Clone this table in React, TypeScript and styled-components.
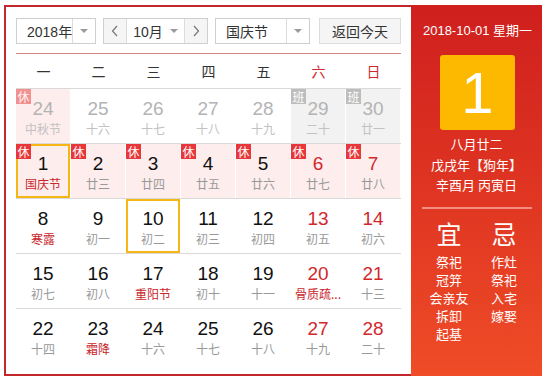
import React from "react";
import styled, { createGlobalStyle, css } from "styled-components";

const Global = createGlobalStyle`
  html, body { margin: 0; padding: 0; background: #fff; }
  body { font-family: "Liberation Sans", "Noto Sans CJK SC", sans-serif; }
  * { box-sizing: border-box; }
`;

const Page = styled.div`
  padding: 5px 0 0 4px;
`;

const Widget = styled.div`
  display: flex;
  width: 538px;
  height: 371px;
`;

const Main = styled.div`
  width: 407px;
  border: 2px solid #c3272b;
  border-right: none;
  padding: 11px 10px 0 10px;
  background: #fff;
`;

const Toolbar = styled.div`
  display: flex;
  align-items: stretch;
  gap: 7px;
  height: 26px;
  font-size: 14px;
  color: #333;
`;

const Select = styled.div<{ $w: number }>`
  width: ${(p) => p.$w}px;
  display: flex;
  border: 1px solid #cfcfcf;
  background: #fff;
`;

const SelectText = styled.div`
  flex: 1;
  display: flex;
  align-items: center;
  padding-left: 10px;
  white-space: nowrap;
  overflow: visible;
  font-family: "Liberation Sans", "Noto Sans CJK SC", sans-serif;
`;

const ArrowBox = styled.div`
  width: 23px;
  flex: none;
  border-left: 1px solid #dcdcdc;
  display: flex;
  align-items: center;
  justify-content: center;
`;

const Caret = styled.span`
  display: inline-block;
  width: 0;
  height: 0;
  border-left: 4px solid transparent;
  border-right: 4px solid transparent;
  border-top: 4px solid #9a9a9a;
`;

const MonthGroup = styled.div`
  width: 105px;
  display: flex;
  border: 1px solid #cfcfcf;
`;

const NavBtn = styled.div`
  width: 22px;
  background: #f5f5f5;
  display: flex;
  align-items: center;
  justify-content: center;
  color: #666;
  svg { display: block; }
`;

const MonthMid = styled.div`
  flex: 1;
  display: flex;
  align-items: center;
  justify-content: center;
  gap: 7px;
  border-left: 1px solid #dcdcdc;
  border-right: 1px solid #dcdcdc;
  background: #fff;
`;

const TodayBtn = styled.div`
  margin-left: auto;
  width: 82px;
  display: flex;
  align-items: center;
  justify-content: center;
  background: #f5f5f5;
  border: 1px solid #dcdcdc;
  color: #333;
`;

const RedLine = styled.div`
  margin-top: 9px;
  height: 1px;
  background: #d9837f;
`;

const WeekHead = styled.div`
  display: grid;
  grid-template-columns: repeat(7, 55px);
  height: 34px;
  align-items: center;
`;

const WeekDay = styled.div<{ $red?: boolean }>`
  text-align: center;
  font-size: 14px;
  color: ${(p) => (p.$red ? "#d2282d" : "#333")};
  font-family: "Noto Sans CJK SC", sans-serif;
`;

const Row = styled.div`
  display: grid;
  grid-template-columns: repeat(7, 55px);
  height: 55px;
  border-top: 1px solid #d9d9d9;
`;

type Tone = "none" | "rest" | "work";

const Cell = styled.div<{ $tone: Tone; $sel?: boolean }>`
  position: relative;
  height: 54px;
  margin-right: 1px;
  display: flex;
  flex-direction: column;
  align-items: center;
  background: ${(p) =>
    p.$tone === "rest" ? "#fdeded" : p.$tone === "work" ? "#f2f2f2" : "#fff"};
  ${(p) =>
    p.$sel &&
    css`
      &::after {
        content: "";
        position: absolute;
        inset: 0;
        border: 2px solid #f4b715;
        z-index: 1;
      }
    `}
`;

const Badge = styled.span<{ $work?: boolean; $faded?: boolean }>`
  position: absolute;
  top: 0;
  left: 0;
  z-index: 2;
  width: 15px;
  height: 15px;
  line-height: 15px;
  text-align: center;
  font-size: 12px;
  color: #fff;
  font-family: "Noto Sans CJK SC", sans-serif;
  background: ${(p) => (p.$work ? "#bdbdbd" : "#e8373a")};
  opacity: ${(p) => (p.$faded ? 0.5 : 1)};
`;

const DayNum = styled.div<{ $color: string }>`
  margin-top: 10px;
  font-size: 19px;
  line-height: 20px;
  height: 20px;
  color: ${(p) => p.$color};
  font-family: "Liberation Sans", Arial, sans-serif;
`;

const Lunar = styled.div<{ $color: string }>`
  margin-top: 2px;
  font-size: 12px;
  line-height: 16px;
  color: ${(p) => p.$color};
  font-family: "Noto Sans CJK SC", sans-serif;
  white-space: nowrap;
`;

const Side = styled.div`
  width: 131px;
  height: 371px;
  background: linear-gradient(180deg, #cf1f1e 0%, #df3522 50%, #ef4c27 100%);
  color: #fff;
  display: flex;
  flex-direction: column;
  align-items: center;
  padding-top: 18px;
  font-family: "Liberation Sans", "Noto Sans CJK SC", sans-serif;
`;

const SideDate = styled.div`
  font-size: 13px;
  line-height: 16px;
  white-space: nowrap;
  margin-left: 2px;
`;

const BigDay = styled.div`
  margin-top: 16px;
  margin-left: 2px;
  width: 75px;
  height: 75px;
  border-radius: 3px;
  background: #fcb900;
  display: flex;
  align-items: center;
  justify-content: center;
  font-size: 58px;
  line-height: 1;
  font-family: "Liberation Sans", Arial, sans-serif;
`;

const LunarInfo = styled.div`
  margin-top: 4px;
  font-size: 13px;
  line-height: 20.5px;
  text-align: center;
  font-family: "Noto Sans CJK SC", sans-serif;
`;

const Sep = styled.div`
  margin-top: 11px;
  width: 110px;
  height: 2px;
  background: rgba(255, 200, 190, 0.6);
`;

const YiJi = styled.div`
  margin-top: 9px;
  width: 110px;
  display: grid;
  grid-template-columns: 55px 55px;
  font-family: "Noto Sans CJK SC", sans-serif;
`;

const YiCol = styled.div`
  display: flex;
  flex-direction: column;
  align-items: center;
`;

const YiHead = styled.div`
  font-size: 25px;
  line-height: 30px;
  margin-bottom: 5px;
`;

const YiItem = styled.div`
  font-size: 13px;
  line-height: 18px;
  white-space: nowrap;
`;

type Day = {
  n: number;
  l: string;
  other?: boolean;
  tone?: Tone;
  badge?: "休" | "班";
  redNum?: boolean;
  redL?: boolean;
  sel?: boolean;
};

const rows: Day[][] = [
  [
    { n: 24, l: "中秋节", other: true, tone: "rest", badge: "休" },
    { n: 25, l: "十六", other: true },
    { n: 26, l: "十七", other: true },
    { n: 27, l: "十八", other: true },
    { n: 28, l: "十九", other: true },
    { n: 29, l: "二十", other: true, tone: "work", badge: "班" },
    { n: 30, l: "廿一", other: true, tone: "work", badge: "班" },
  ],
  [
    { n: 1, l: "国庆节", tone: "rest", badge: "休", redL: true, sel: true },
    { n: 2, l: "廿三", tone: "rest", badge: "休" },
    { n: 3, l: "廿四", tone: "rest", badge: "休" },
    { n: 4, l: "廿五", tone: "rest", badge: "休" },
    { n: 5, l: "廿六", tone: "rest", badge: "休" },
    { n: 6, l: "廿七", tone: "rest", badge: "休", redNum: true },
    { n: 7, l: "廿八", tone: "rest", badge: "休", redNum: true },
  ],
  [
    { n: 8, l: "寒露", redL: true },
    { n: 9, l: "初一" },
    { n: 10, l: "初二", sel: true },
    { n: 11, l: "初三" },
    { n: 12, l: "初四" },
    { n: 13, l: "初五", redNum: true },
    { n: 14, l: "初六", redNum: true },
  ],
  [
    { n: 15, l: "初七" },
    { n: 16, l: "初八" },
    { n: 17, l: "重阳节", redL: true },
    { n: 18, l: "初十" },
    { n: 19, l: "十一" },
    { n: 20, l: "骨质疏...", redNum: true, redL: true },
    { n: 21, l: "十三", redNum: true },
  ],
  [
    { n: 22, l: "十四" },
    { n: 23, l: "霜降", redL: true },
    { n: 24, l: "十六" },
    { n: 25, l: "十七" },
    { n: 26, l: "十八" },
    { n: 27, l: "十九", redNum: true },
    { n: 28, l: "二十", redNum: true },
  ],
];

const weekDays = ["一", "二", "三", "四", "五", "六", "日"];
const yi = ["祭祀", "冠笄", "会亲友", "拆卸", "起基"];
const ji = ["作灶", "祭祀", "入宅", "嫁娶"];

const Chevron = ({ dir }: { dir: "l" | "r" }) => (
  <svg width="8" height="12" viewBox="0 0 8 12">
    <path
      d={dir === "l" ? "M6 1 L1.5 6 L6 11" : "M2 1 L6.5 6 L2 11"}
      fill="none"
      stroke="#777"
      strokeWidth="1.2"
    />
  </svg>
);

export default function App() {
  return (
    <Page>
      <Global />
      <Widget>
        <Main>
          <Toolbar>
            <Select $w={80}>
              <SelectText>2018年</SelectText>
              <ArrowBox>
                <Caret />
              </ArrowBox>
            </Select>
            <MonthGroup>
              <NavBtn>
                <Chevron dir="l" />
              </NavBtn>
              <MonthMid>
                <span>10月</span>
                <Caret />
              </MonthMid>
              <NavBtn>
                <Chevron dir="r" />
              </NavBtn>
            </MonthGroup>
            <Select $w={95}>
              <SelectText>国庆节</SelectText>
              <ArrowBox>
                <Caret />
              </ArrowBox>
            </Select>
            <TodayBtn>返回今天</TodayBtn>
          </Toolbar>
          <RedLine />
          <WeekHead>
            {weekDays.map((w, i) => (
              <WeekDay key={w} $red={i >= 5}>
                {w}
              </WeekDay>
            ))}
          </WeekHead>
          {rows.map((r, ri) => (
            <Row key={ri}>
              {r.map((d, di) => {
                const numColor = d.other ? "#b4b4b4" : d.redNum ? "#d2282d" : "#111";
                const lColor = d.other ? "#c2c2c2" : d.redL ? "#c9262c" : "#999";
                return (
                  <Cell key={di} $tone={d.tone ?? "none"} $sel={d.sel}>
                    {d.badge && (
                      <Badge $work={d.badge === "班"} $faded={d.other && d.badge === "休"}>
                        {d.badge}
                      </Badge>
                    )}
                    <DayNum $color={numColor}>{d.n}</DayNum>
                    <Lunar $color={lColor}>{d.l}</Lunar>
                  </Cell>
                );
              })}
            </Row>
          ))}
        </Main>
        <Side>
          <SideDate>2018-10-01 星期一</SideDate>
          <BigDay>1</BigDay>
          <LunarInfo>
            <div>八月廿二</div>
            <div>戊戌年【狗年】</div>
            <div>辛酉月 丙寅日</div>
          </LunarInfo>
          <Sep />
          <YiJi>
            <YiCol>
              <YiHead>宜</YiHead>
              {yi.map((t) => (
                <YiItem key={t}>{t}</YiItem>
              ))}
            </YiCol>
            <YiCol>
              <YiHead>忌</YiHead>
              {ji.map((t) => (
                <YiItem key={t}>{t}</YiItem>
              ))}
            </YiCol>
          </YiJi>
        </Side>
      </Widget>
    </Page>
  );
}
